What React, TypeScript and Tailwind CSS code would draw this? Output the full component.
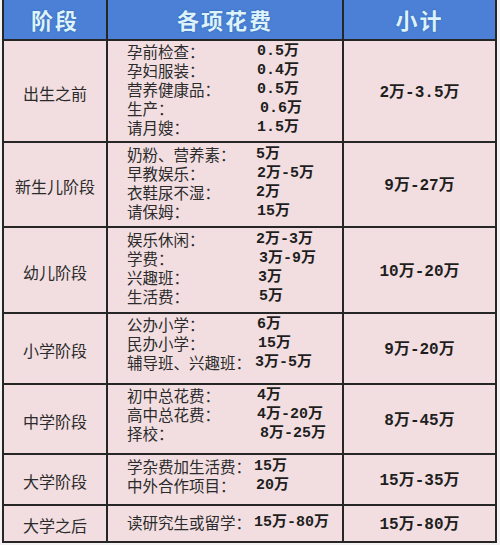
import React from 'react';

type Item = { label: string; value: string; off: string };
type Stage = { name: string; total: string; h: string; pt: string; items: Item[] };

const cjk = "font-['Noto_Sans_CJK_SC','Noto_Sans',sans-serif]";
const mono = "font-['Liberation_Mono','Noto_Sans_CJK_SC',monospace]";

// 每个阶段的行高按截图量出来的像素写死
const stages: Stage[] = [
  {
    name: '出生之前', total: '2万-3.5万', h: 'h-[102px]', pt: 'pt-[1px]',
    items: [
      { label: '孕前检查：', value: '0.5万', off: 'ml-[3px]' },
      { label: '孕妇服装：', value: '0.4万', off: 'ml-[3px]' },
      { label: '营养健康品：', value: '0.5万', off: 'ml-[3px]' },
      { label: '生产：', value: '0.6万', off: 'ml-[6px]' },
      { label: '请月嫂：', value: '1.5万', off: 'ml-[3px]' },
    ],
  },
  {
    name: '新生儿阶段', total: '9万-27万', h: 'h-[85px]', pt: 'pt-[2px]',
    items: [
      { label: '奶粉、营养素：', value: '5万', off: 'ml-[2px]' },
      { label: '早教娱乐：', value: '2万-5万', off: 'ml-[3px]' },
      { label: '衣鞋尿不湿：', value: '2万', off: 'ml-[2px]' },
      { label: '请保姆：', value: '15万', off: 'ml-[3px]' },
    ],
  },
  {
    name: '幼儿阶段', total: '10万-20万', h: 'h-[86px]', pt: 'pt-[2px]',
    items: [
      { label: '娱乐休闲：', value: '2万-3万', off: 'ml-[2px]' },
      { label: '学费：', value: '3万-9万', off: 'ml-[5px]' },
      { label: '兴趣班：', value: '3万', off: 'ml-[4px]' },
      { label: '生活费：', value: '5万', off: 'ml-[5px]' },
    ],
  },
  {
    name: '小学阶段', total: '9万-20万', h: 'h-[71px]', pt: 'pt-[1px]',
    items: [
      { label: '公办小学：', value: '6万', off: 'ml-[3px]' },
      { label: '民办小学：', value: '15万', off: 'ml-[4px]' },
      { label: '辅导班、兴趣班：', value: '3万-5万', off: 'ml-[1px]' },
    ],
  },
  {
    name: '中学阶段', total: '8万-45万', h: 'h-[70px]', pt: 'pt-[1px]',
    items: [
      { label: '初中总花费：', value: '4万', off: 'ml-[3px]' },
      { label: '高中总花费：', value: '4万-20万', off: 'ml-[3px]' },
      { label: '择校：', value: '8万-25万', off: 'ml-[6px]' },
    ],
  },
  {
    name: '大学阶段', total: '15万-35万', h: 'h-[51px]', pt: 'pt-[2px]',
    items: [
      { label: '学杂费加生活费：', value: '15万', off: 'ml-0' },
      { label: '中外合作项目：', value: '20万', off: 'ml-[2px]' },
    ],
  },
  {
    name: '大学之后', total: '15万-80万', h: 'h-[35px]', pt: 'pt-[7px]',
    items: [{ label: '读研究生或留学：', value: '15万-80万', off: 'ml-0' }],
  },
];

const App: React.FC = () => {
  return (
    <div className="w-[500px] h-[545px] bg-[#f4f2f3]">
      <div className="ml-[2px] w-[495px] border-l-2 border-r-2 border-b-2 border-[#262626]">
        {/* 表头 */}
        <div className="grid grid-cols-[104px_236px_1fr] h-[41px] bg-[#4b80d6] border-b-2 border-[#262626]">
          {['阶段', '各项花费', '小计'].map((t, i) => (
            <div
              key={t}
              className={`flex items-center justify-center ${i < 2 ? 'border-r-2 border-[#262626]' : ''}`}
            >
              <span className={`${cjk} text-[22px] font-bold text-[#dcf3fb] tracking-[2px] [text-shadow:0_0_2px_#2f5fa8]`}>
                {t}
              </span>
            </div>
          ))}
        </div>

        {/* 各阶段 */}
        {stages.map((s, idx) => (
          <div
            key={s.name}
            className={`grid grid-cols-[104px_236px_1fr] ${s.h} bg-[#f2dee1] ${idx < stages.length - 1 ? 'border-b-2 border-[#262626]' : ''}`}
          >
            <div className="flex items-center justify-center border-r-2 border-[#262626] pt-[3px]">
              <span className={`${cjk} text-[16px] text-[#2b2b2b]`}>{s.name}</span>
            </div>
            <div className={`flex flex-col border-r-2 border-[#262626] pl-[19px] ${s.pt}`}>
              {s.items.map((it) => (
                <div key={it.label} className="flex items-center h-[19px]">
                  <span className={`${cjk} w-[127px] shrink-0 text-[15.5px] leading-[19px] text-[#2b2b2b] whitespace-nowrap`}>
                    {it.label}
                  </span>
                  <span className={`${mono} ${it.off} text-[15px] font-bold leading-[19px] text-[#1e1e1e] whitespace-nowrap`}>
                    {it.value}
                  </span>
                </div>
              ))}
            </div>
            <div className="flex items-center justify-center pt-[3px]">
              <span className={`${mono} text-[16px] font-bold text-[#1e1e1e] whitespace-nowrap`}>{s.total}</span>
            </div>
          </div>
        ))}
      </div>
    </div>
  );
};

export default App;
